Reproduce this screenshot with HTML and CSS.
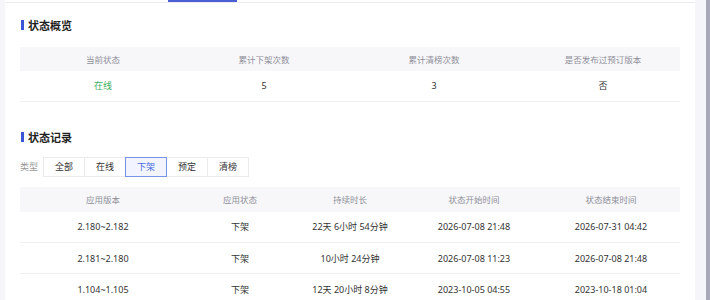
FILE: index.html
```html
<!DOCTYPE html>
<html lang="zh-CN">
<head>
    <meta charset="UTF-8">
    <title>状态</title>
    <link rel="stylesheet" href="styles.css">
</head>
<body>
    <div class="pagina">
        <div class="cartao">
            <div class="abas">
                <div class="aba-ativa"></div>
            </div>
            <div class="conteudo">
                <h3 class="titulo">状态概览</h3>
                <table class="tabela resumo">
                    <colgroup>
                        <col style="width:166px"><col style="width:156px"><col style="width:184px"><col style="width:154px">
                    </colgroup>
                    <thead>
                        <tr><th>当前状态</th><th>累计下架次数</th><th>累计清榜次数</th><th>是否发布过预订版本</th></tr>
                    </thead>
                    <tbody>
                        <tr><td class="online">在线</td><td>5</td><td>3</td><td>否</td></tr>
                    </tbody>
                </table>

                <h3 class="titulo segundo">状态记录</h3>
                <div class="filtro">
                    <span class="rotulo">类型</span>
                    <div class="grupo">
                        <button>全部</button>
                        <button>在线</button>
                        <button class="ativo">下架</button>
                        <button>预定</button>
                        <button>清榜</button>
                    </div>
                </div>

                <table class="tabela registros">
                    <colgroup>
                        <col style="width:166px"><col style="width:108px"><col style="width:112px"><col style="width:136px"><col style="width:138px">
                    </colgroup>
                    <thead>
                        <tr><th>应用版本</th><th>应用状态</th><th>持续时长</th><th>状态开始时间</th><th>状态结束时间</th></tr>
                    </thead>
                    <tbody>
                        <tr><td>2.180~2.182</td><td>下架</td><td>22天 6小时 54分钟</td><td>2026-07-08 21:48</td><td>2026-07-31 04:42</td></tr>
                        <tr><td>2.181~2.180</td><td>下架</td><td>10小时 24分钟</td><td>2026-07-08 11:23</td><td>2026-07-08 21:48</td></tr>
                        <tr><td>1.104~1.105</td><td>下架</td><td>12天 20小时 8分钟</td><td>2023-10-05 04:55</td><td>2023-10-18 01:04</td></tr>
                    </tbody>
                </table>
            </div>
        </div>
    </div>
    <div class="rolagem"></div>
</body>
</html>
```

FILE: styles.css
```css
* {
    box-sizing: border-box;
    margin: 0;
    padding: 0;
}

body {
    display: flex;
    height: 300px;
    overflow: hidden;
    background-color: #f5f5fa;
    font-family: 'Noto Sans', 'Noto Sans CJK SC', sans-serif;
    color: #333;
}

.pagina {
    flex: 1;
    padding: 0 11px 0 5px;
}

.cartao {
    background-color: white;
    height: 100%;
}

.abas {
    height: 3px;
    border-bottom: 1px solid #ececf0;
}

.aba-ativa {
    margin-left: 163px;
    width: 69px;
    height: 2px;
    background-color: #4a5fd3;
}

.conteudo {
    padding: 0 15px;
}

.titulo {
    display: flex;
    align-items: center;
    gap: 4px;
    height: 16px;
    margin-top: 14px;
    font-size: 11px;
    font-weight: 700;
    color: #1f1f1f;
}

.titulo::before {
    content: '';
    width: 3px;
    height: 10px;
    margin-left: 1px;
    background-color: #3a55d8;
}

.titulo.segundo {
    margin-top: 27px;
}

.tabela {
    width: 660px;
    border-collapse: collapse;
    table-layout: fixed;
    margin-top: 14px;
    text-align: center;
}

.tabela th {
    height: 24px;
    background-color: #f7f7f9;
    font-size: 8.5px;
    font-weight: 400;
    color: #8f8f99;
}

.tabela td {
    height: 30px;
    font-size: 9px;
    border-bottom: 1px solid #f0f0f2;
}

.registros {
    margin-top: 10px;
}

.registros th {
    height: 25px;
}

.registros td {
    height: 31px;
}

.online {
    color: #3dae62;
}

.filtro {
    display: flex;
    align-items: center;
    gap: 5px;
    margin-top: 12px;
}

.rotulo {
    font-size: 9px;
    color: #999;
}

.grupo {
    display: flex;
}

.grupo button {
    width: 42px;
    height: 20px;
    margin-left: -1px;
    border: 1px solid #ebebee;
    background-color: white;
    font-family: inherit;
    font-size: 9px;
    color: #333;
}

.grupo button:first-child {
    margin-left: 0;
}

.grupo button.ativo {
    position: relative;
    border-color: #7892e6;
    background-color: #f2f5ff;
    color: #4a6bdb;
}

.rolagem {
    width: 4px;
    background-color: #a9a8b9;
}
```
